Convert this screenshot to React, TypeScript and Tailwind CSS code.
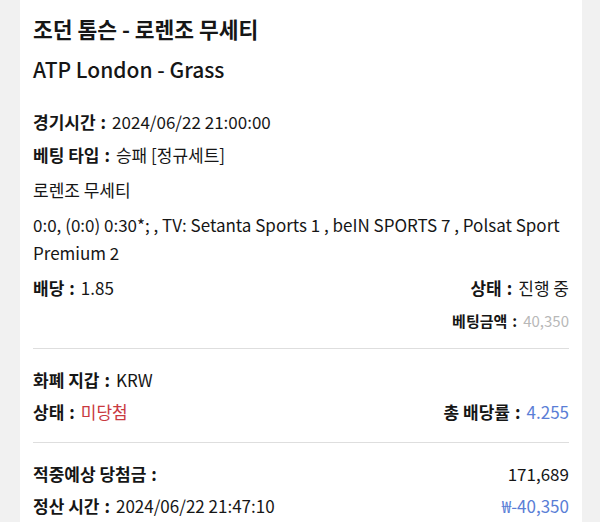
import React from "react";

const font = { fontFamily: '"Noto Sans CJK KR", "Noto Sans", sans-serif' };

function Label({ children }: { children: React.ReactNode }) {
  return (
    <span className="font-bold">
      {children}
      <span className="ml-[5px] mr-[6px]">:</span>
    </span>
  );
}

export default function App() {
  return (
    <div className="w-[600px] h-[522px] bg-[#f1f1f1] overflow-hidden" style={font}>
      <div className="mx-[20px] w-[562px] h-full bg-white px-[13px] pt-[9px] text-[#161616] text-[17px]">
        <div className="h-[41px] flex items-center text-[21.5px] font-bold">
          조던 톰슨 - 로렌조 무세티
        </div>
        <div className="h-[40px] flex items-center text-[21px] font-medium">
          ATP London - Grass
        </div>

        <div className="mt-[15px] h-[33px] flex items-center">
          <Label>경기시간</Label>
          <span>2024/06/22 21:00:00</span>
        </div>
        <div className="h-[33px] flex items-center">
          <Label>베팅 타입</Label>
          <span>승패 [정규세트]</span>
        </div>
        <div className="h-[37px] flex items-center">로렌조 무세티</div>
        <p className="mt-[3px] leading-[28px]">
          0:0, (0:0) 0:30*; , TV: Setanta Sports 1 , beIN SPORTS 7 , Polsat Sport Premium 2
        </p>
        <div className="mt-[4px] h-[34px] flex items-center justify-between">
          <div>
            <Label>배당</Label>
            <span>1.85</span>
          </div>
          <div>
            <Label>상태</Label>
            <span>진행 중</span>
          </div>
        </div>
        <div className="h-[32px] flex items-center justify-end text-[15px]">
          <Label>베팅금액</Label>
          <span className="text-[#b8b8b8]">40,350</span>
        </div>

        <div className="mt-[11px] h-[1px] bg-[#dedede]" />

        <div className="mt-[15px] h-[32px] flex items-center">
          <Label>화폐 지갑</Label>
          <span>KRW</span>
        </div>
        <div className="h-[32px] flex items-center justify-between">
          <div>
            <Label>상태</Label>
            <span className="text-[#c9393f]">미당첨</span>
          </div>
          <div>
            <Label>총 배당률</Label>
            <span className="text-[#5a7ed6]">4.255</span>
          </div>
        </div>

        <div className="mt-[14px] h-[1px] bg-[#dedede]" />

        <div className="mt-[15px] h-[32px] flex items-center justify-between">
          <span className="font-bold">
            적중예상 당첨금<span className="ml-[5px]">:</span>
          </span>
          <span>171,689</span>
        </div>
        <div className="h-[32px] flex items-center justify-between">
          <div>
            <Label>정산 시간</Label>
            <span>2024/06/22 21:47:10</span>
          </div>
          <span className="text-[#5a7ed6]">₩-40,350</span>
        </div>
      </div>
    </div>
  );
}
